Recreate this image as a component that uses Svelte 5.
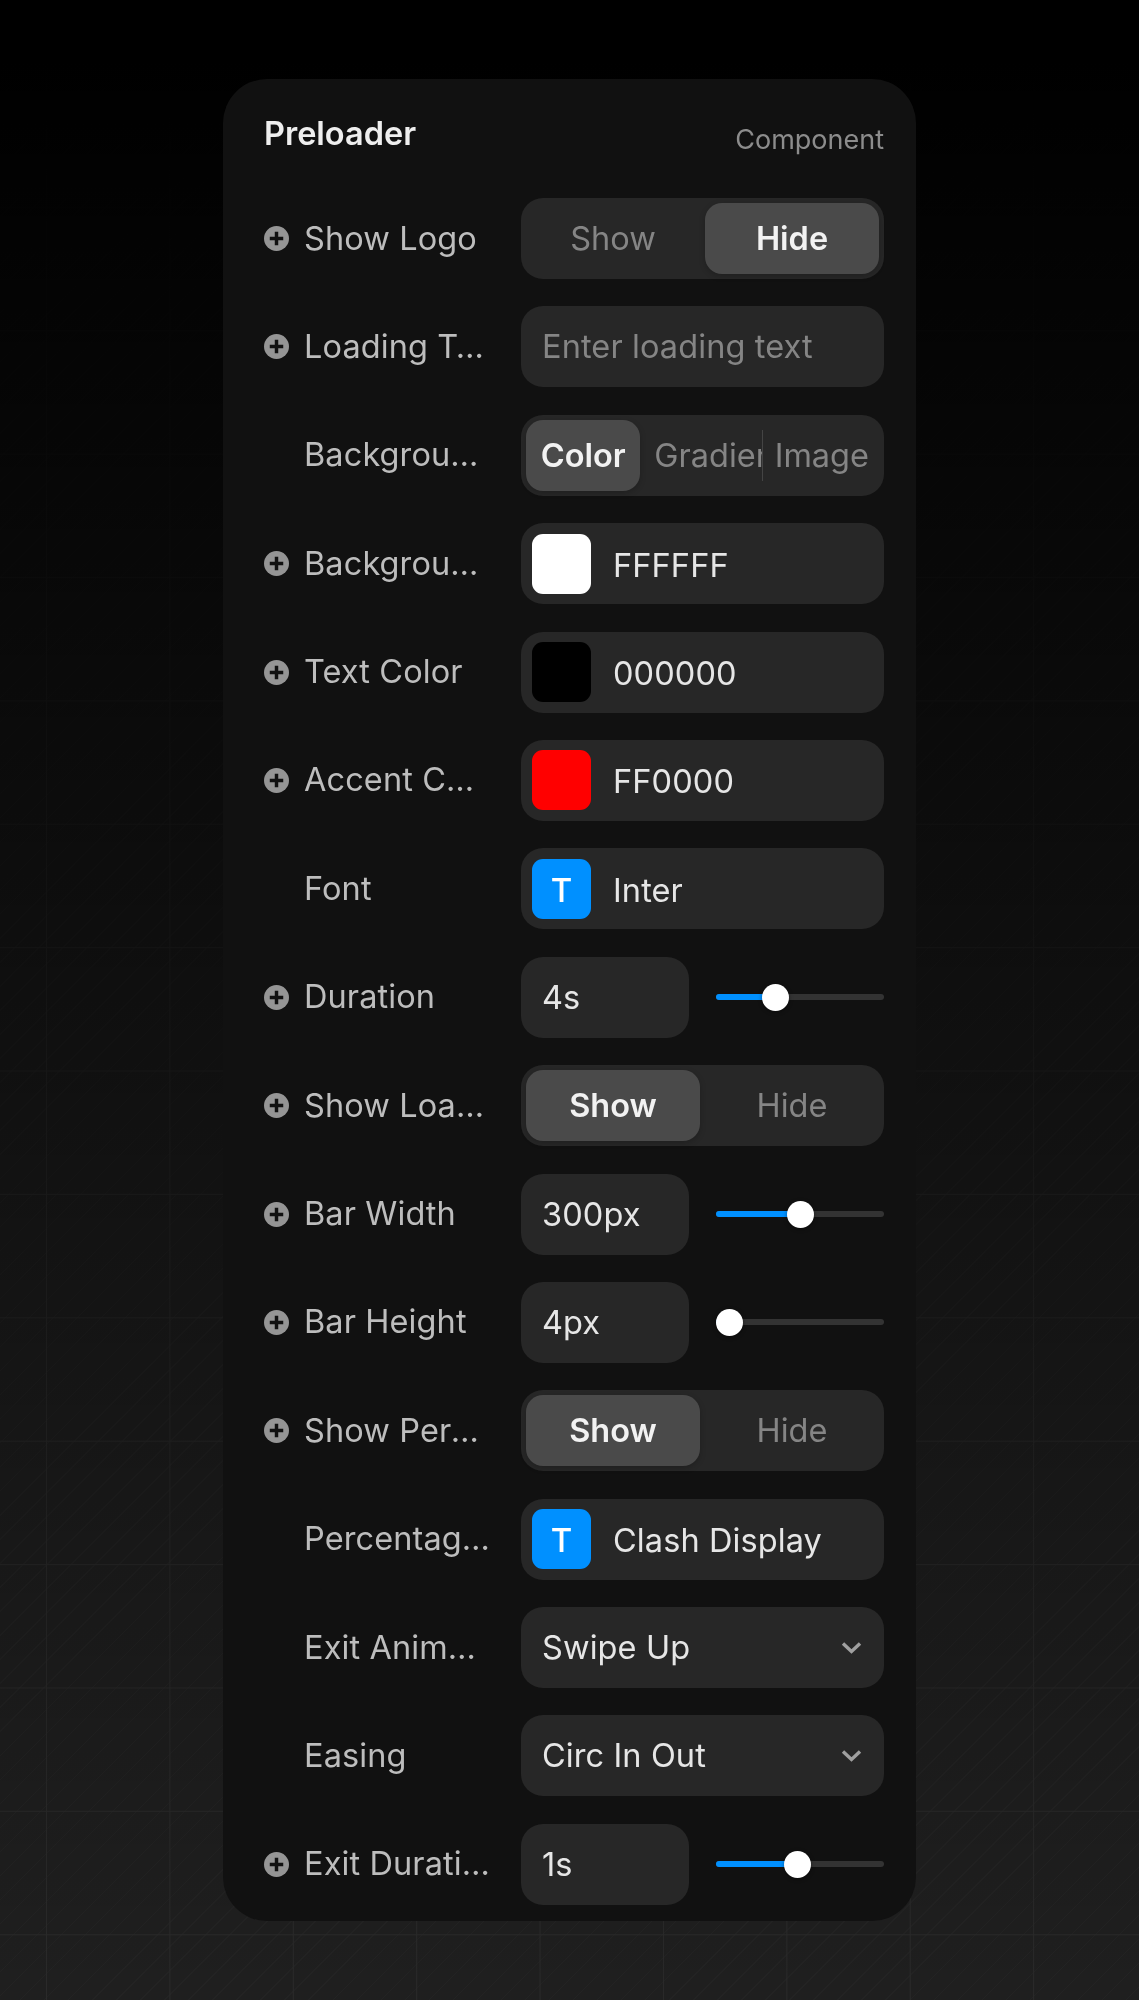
<script>
	const rows = [
		{ label: 'Show Logo', add: true, type: 'seg', options: ['Show', 'Hide'], active: 1 },
		{ label: 'Loading Text', add: true, type: 'input', placeholder: 'Enter loading text' },
		{ label: 'Background Type', type: 'seg', options: ['Color', 'Gradient', 'Image'], active: 0 },
		{ label: 'Background Color', add: true, type: 'color', color: '#ffffff', value: 'FFFFFF' },
		{ label: 'Text Color', add: true, type: 'color', color: '#000000', value: '000000' },
		{ label: 'Accent Color', add: true, type: 'color', color: '#ff0000', value: 'FF0000' },
		{ label: 'Font', type: 'font', value: 'Inter' },
		{ label: 'Duration', add: true, type: 'slider', value: '4s', pos: 35.5 },
		{ label: 'Show Loading Bar', add: true, type: 'seg', options: ['Show', 'Hide'], active: 0 },
		{ label: 'Bar Width', add: true, type: 'slider', value: '300px', pos: 50 },
		{ label: 'Bar Height', add: true, type: 'slider', value: '4px', pos: 8 },
		{ label: 'Show Percentage', add: true, type: 'seg', options: ['Show', 'Hide'], active: 0 },
		{ label: 'Percentage Font', type: 'font', value: 'Clash Display' },
		{ label: 'Exit Animation', type: 'select', value: 'Swipe Up' },
		{ label: 'Easing', type: 'select', value: 'Circ In Out' },
		{ label: 'Exit Duration', add: true, type: 'slider', value: '1s', pos: 48.5 }
	];
</script>

<main class="page">
	<section class="panel">
		<header>
			<h1>Preloader</h1>
			<span>Component</span>
		</header>

		<div class="rows">
			{#each rows as row}
				<div class="row">
					<div class="slot">
						{#if row.add}
							<svg viewBox="0 0 26 26" width="25" height="25">
								<circle cx="13" cy="13" r="13" fill="#959595" />
								<path d="M13 6v14M6 13h14" stroke="#111" stroke-width="3.6" />
							</svg>
						{/if}
					</div>
					<div class="label">{row.label}</div>

					{#if row.type === 'seg'}
						<div class="control seg">
							{#each row.options as option, i}
								<div class="opt" class:on={i === row.active} class:clip={option === 'Gradient'}>{option}</div>
							{/each}
						</div>
					{:else if row.type === 'input'}
						<div class="control text muted">{row.placeholder}</div>
					{:else if row.type === 'color'}
						<div class="control swatched">
							<div class="swatch" style="background: {row.color}"></div>
							<span>{row.value}</span>
						</div>
					{:else if row.type === 'font'}
						<div class="control swatched">
							<div class="swatch blue">T</div>
							<span>{row.value}</span>
						</div>
					{:else if row.type === 'select'}
						<div class="control text select">
							<span>{row.value}</span>
							<svg viewBox="0 0 21 14" width="21" height="14">
								<path d="M2 2.5l8.5 8 8.5-8" fill="none" stroke="#a0a0a0" stroke-width="3.4" />
							</svg>
						</div>
					{:else}
						<div class="split">
							<div class="control text num">{row.value}</div>
							<div class="slider">
								<div class="fill" style="width: {row.pos}%"></div>
								<div class="knob" style="left: {row.pos}%"></div>
							</div>
						</div>
					{/if}
				</div>
			{/each}
		</div>
	</section>
</main>

<style>
	:global(body) {
		background: #000;
	}

	.page {
		height: 2000px;
		padding-top: 79px;
		box-sizing: border-box;
		overflow: hidden;
		font-family: Inter, 'Liberation Sans', sans-serif;
		background:
			linear-gradient(to bottom, #000 60px, rgba(0, 0, 0, 0) 2000px),
			linear-gradient(to right, #2a2a2a 1px, transparent 1px) 46px 0 / 123.4px 123.4px,
			linear-gradient(to bottom, #2a2a2a 1px, transparent 1px) 0 83.4px / 123.4px 123.4px,
			repeating-linear-gradient(135deg, #232323 0 1px, transparent 1px 17px),
			#1f1f1f;
	}

	.panel {
		width: 693px;
		margin: 0 auto;
		box-sizing: border-box;
		padding: 0 32px 16px 41px;
		background: #111;
		border-radius: 44px;
		filter: blur(0.6px);
	}

	header {
		display: flex;
		justify-content: space-between;
		align-items: baseline;
		height: 119px;
		padding-top: 33px;
		box-sizing: border-box;
	}

	h1 {
		margin: 0;
		font-size: 32.5px;
		line-height: 44px;
		font-weight: 600;
		color: #eee;
	}

	header span {
		font-size: 27px;
		color: #8c8c8c;
		transform: translateY(4px);
	}

	.rows {
		display: flex;
		flex-direction: column;
		gap: 27.4px;
	}

	.row {
		display: grid;
		grid-template-columns: 40px 217px 363px;
		align-items: center;
		height: 81px;
	}

	.slot {
		height: 25px;
		line-height: 0;
	}

	.label {
		font-size: 32.5px;
		line-height: 40px;
		letter-spacing: 0.1px;
		color: #bdbdbd;
		white-space: nowrap;
		overflow: hidden;
		text-overflow: ellipsis;
		margin-right: 31px;
	}

	.control {
		height: 81px;
		box-sizing: border-box;
		background: #272727;
		border-radius: 22px;
		font-size: 32.5px;
		color: #e6e6e6;
	}

	.text {
		display: flex;
		align-items: center;
		padding: 0 21px;
		letter-spacing: 0.1px;
	}

	.muted {
		color: #858585;
	}

	.select {
		justify-content: space-between;
		padding-right: 22px;
	}

	.seg {
		display: grid;
		grid-auto-flow: column;
		grid-auto-columns: 1fr;
		column-gap: 5px;
		padding: 5px;
	}

	.opt {
		display: flex;
		align-items: center;
		justify-content: center;
		min-width: 0;
		border-radius: 17px;
		color: #858585;
		overflow: hidden;
		white-space: nowrap;
	}

	.opt.on {
		background: #4a4a4a;
		font-weight: 600;
		color: #f2f2f2;
		box-shadow: 0 2px 6px rgba(0, 0, 0, 0.2);
	}

	.opt.clip {
		justify-content: flex-start;
		padding-left: 9px;
		border-radius: 0;
		border-right: 1px solid #444;
		margin: 10px -3px 10px 0;
	}

	.swatched {
		display: flex;
		align-items: center;
		gap: 22px;
		padding: 0 11px;
	}

	.swatched > span {
		padding-top: 3px;
		letter-spacing: 0.1px;
	}

	.swatch {
		width: 59px;
		height: 60px;
		border-radius: 11px;
	}

	.blue {
		display: flex;
		align-items: center;
		justify-content: center;
		box-sizing: border-box;
		padding-top: 2px;
		background: #0090ff;
		color: #fff;
		font-size: 33px;
		font-weight: 500;
	}

	.split {
		display: grid;
		grid-template-columns: 168px 1fr;
		column-gap: 27px;
		align-items: center;
	}

	.slider {
		position: relative;
		height: 6px;
		background: #333;
		border-radius: 3px;
	}

	.fill {
		height: 100%;
		background: #0090ff;
		border-radius: 3px 0 0 3px;
	}

	.knob {
		position: absolute;
		top: -10.5px;
		width: 27px;
		height: 27px;
		margin-left: -13.5px;
		border-radius: 50%;
		background: #fff;
		box-shadow: 0 1px 4px rgba(0, 0, 0, 0.4);
	}
</style>
